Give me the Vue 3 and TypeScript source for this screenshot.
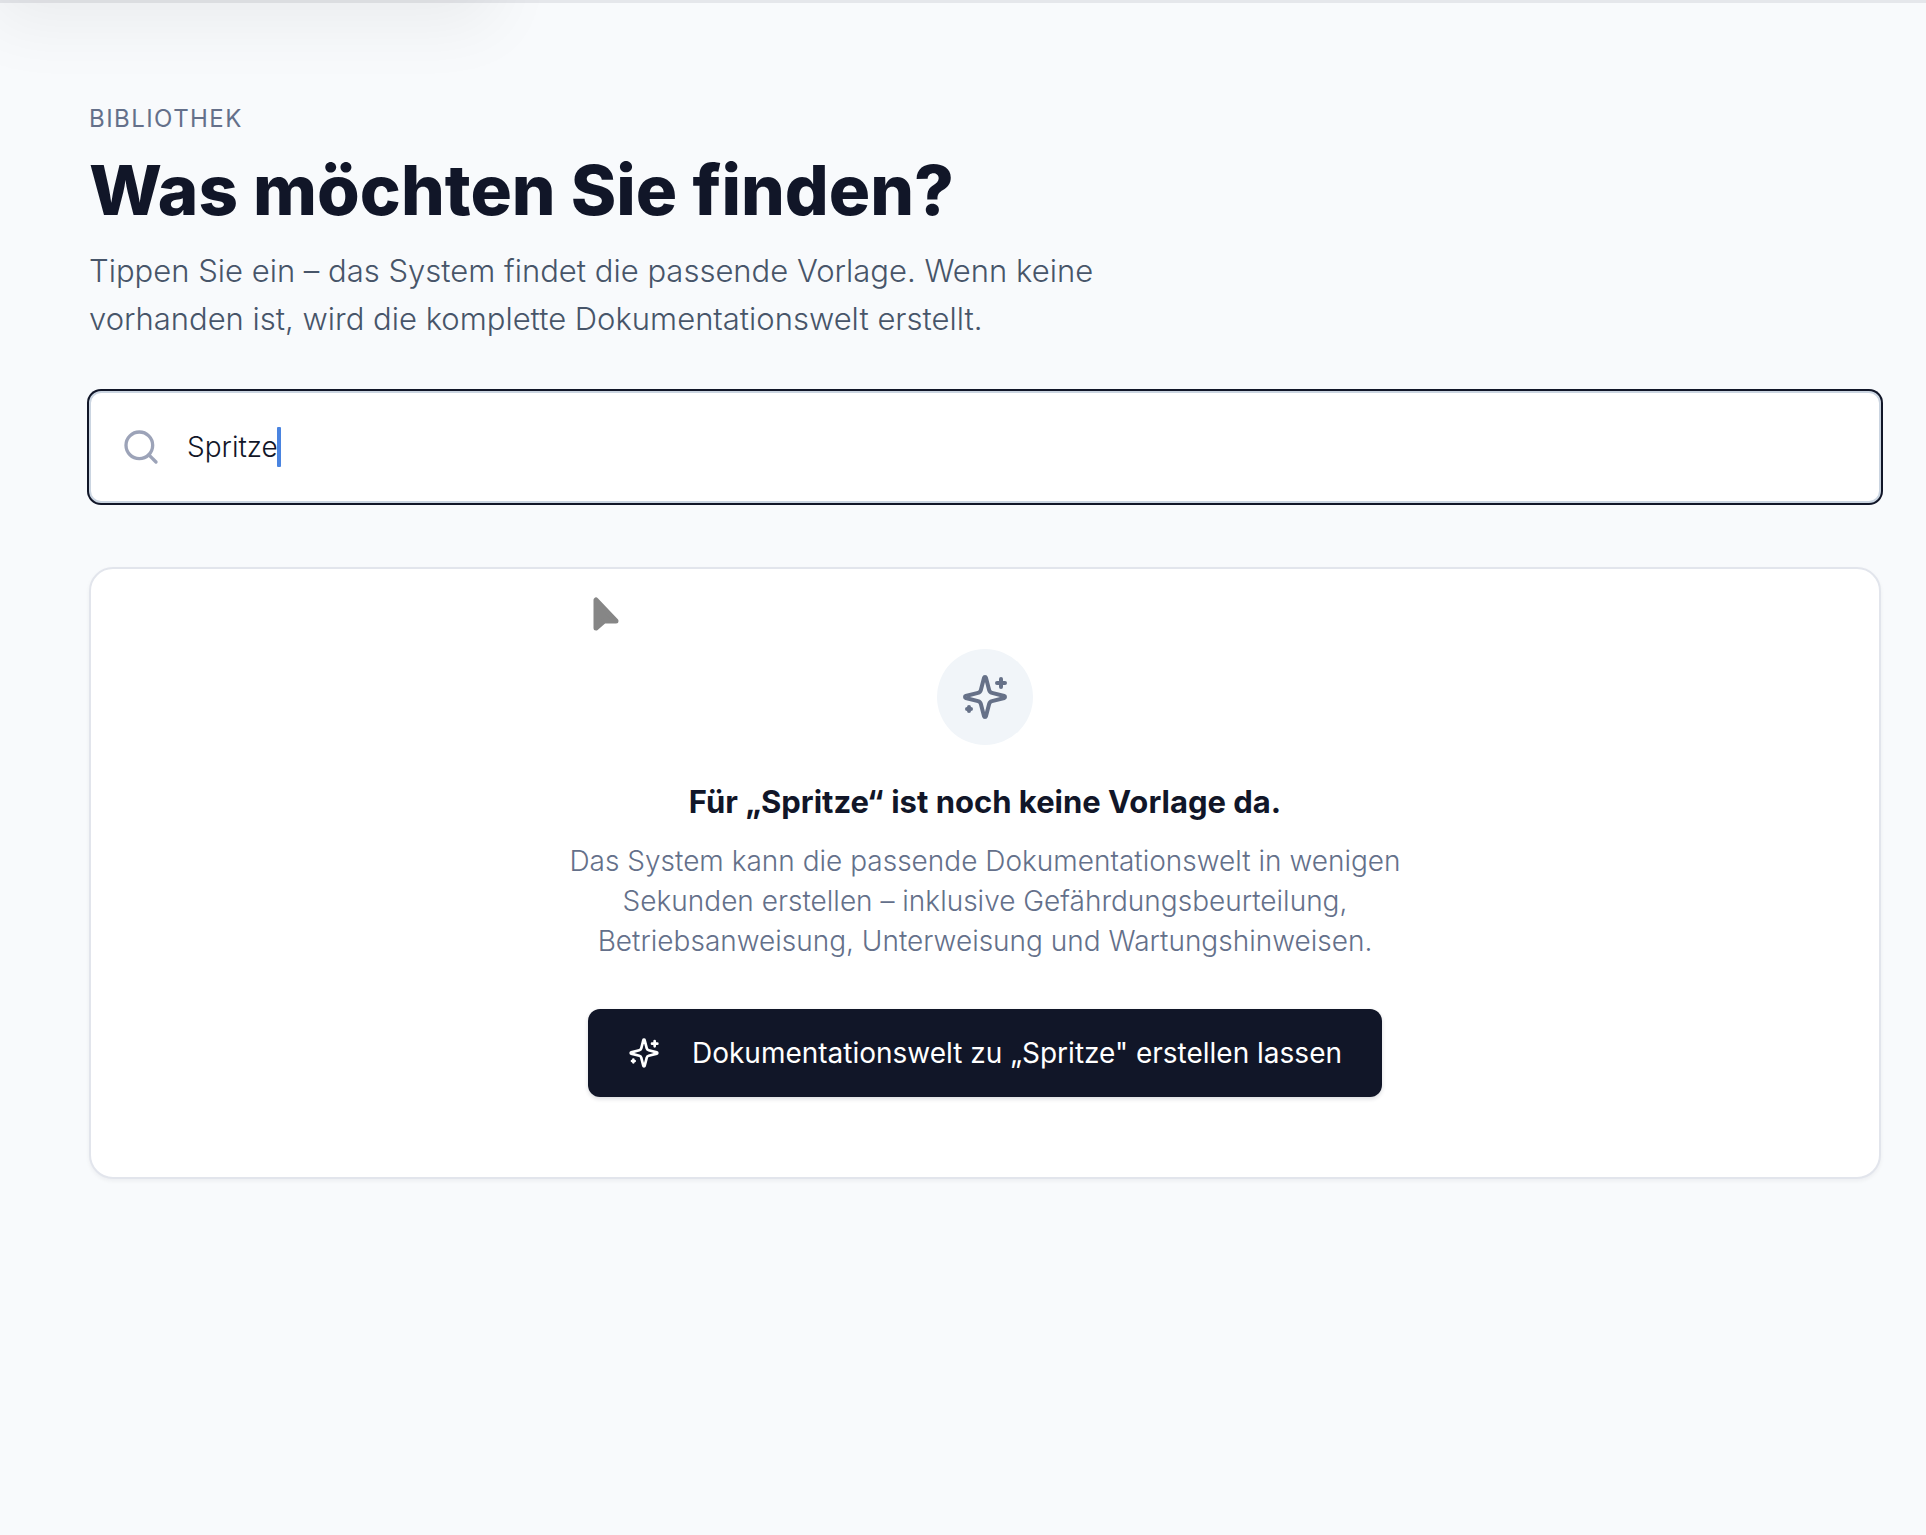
<script setup lang="ts">
import { ref } from 'vue'

const query = ref('Spritze')
</script>

<template>
  <div class="page">
    <div class="topbar">
      <div class="flyout"></div>
    </div>

    <main class="content">
      <header class="intro">
        <p class="eyebrow">Bibliothek</p>
        <h1 class="title">Was möchten Sie finden?</h1>
        <p class="lead">
          Tippen Sie ein – das System findet die passende Vorlage. Wenn keine<br />
          vorhanden ist, wird die komplette Dokumentationswelt erstellt.
        </p>
      </header>

      <label class="search">
        <svg class="search-icon" viewBox="0 0 24 24" aria-hidden="true">
          <circle cx="11" cy="11" r="8" />
          <path d="m21 21-4.3-4.3" />
        </svg>
        <input v-model="query" class="search-input" type="text" aria-label="Suche" />
        <span class="caret"></span>
      </label>

      <section class="card">
        <svg class="pointer" viewBox="0 0 26 34" aria-hidden="true">
          <path d="M3 3v28l8-7h12z" />
        </svg>
        <div class="badge">
          <svg class="badge-icon" viewBox="0 0 24 24" aria-hidden="true">
            <path d="M9.937 15.5A2 2 0 0 0 8.5 14.063l-6.135-1.582a.5.5 0 0 1 0-.962L8.5 9.936A2 2 0 0 0 9.937 8.5l1.582-6.135a.5.5 0 0 1 .963 0L14.063 8.5A2 2 0 0 0 15.5 9.937l6.135 1.581a.5.5 0 0 1 0 .964L15.5 14.063a2 2 0 0 0-1.437 1.437l-1.582 6.135a.5.5 0 0 1-.963 0z" />
            <path d="M20 3v4M22 5h-4M4 17v2M5 18H3" />
          </svg>
        </div>
        <h2 class="card-title">Für „{{ query }}“ ist noch keine Vorlage da.</h2>
        <p class="card-text">
          Das System kann die passende Dokumentationswelt in wenigen<br />
          Sekunden erstellen – inklusive Gefährdungsbeurteilung,<br />
          Betriebsanweisung, Unterweisung und Wartungshinweisen.
        </p>
        <button class="create" type="button">
          <svg class="create-icon" viewBox="0 0 24 24" aria-hidden="true">
            <path d="M9.937 15.5A2 2 0 0 0 8.5 14.063l-6.135-1.582a.5.5 0 0 1 0-.962L8.5 9.936A2 2 0 0 0 9.937 8.5l1.582-6.135a.5.5 0 0 1 .963 0L14.063 8.5A2 2 0 0 0 15.5 9.937l6.135 1.581a.5.5 0 0 1 0 .964L15.5 14.063a2 2 0 0 0-1.437 1.437l-1.582 6.135a.5.5 0 0 1-.963 0z" />
            <path d="M20 3v4M22 5h-4M4 17v2M5 18H3" />
          </svg>
          <span>Dokumentationswelt zu „{{ query }}" erstellen lassen</span>
        </button>
      </section>
    </main>
  </div>
</template>

<style>
body {
  margin: 0;
  background: #f8fafc;
}
</style>

<style scoped>
.page {
  min-height: 100vh;
  overflow: hidden;
  background: #f8fafc;
  color: #111628;
  font-family: Inter, "Liberation Sans", sans-serif;
}

.topbar {
  position: relative;
  height: 3px;
  background: #e5e7eb;
}

.flyout {
  position: absolute;
  left: -32px;
  bottom: 100%;
  width: 550px;
  height: 400px;
  box-shadow: 0 48px 64px -24px rgba(0, 0, 0, 0.06);
}

.content {
  display: flex;
  flex-direction: column;
  padding: 100px 45px 0 89px;
}

.eyebrow {
  margin: 0 0 15px;
  font-size: 24px;
  line-height: 32px;
  letter-spacing: 0.06em;
  text-transform: uppercase;
  color: #64708a;
}

.title {
  margin: 0 0 17px;
  font-size: 69px;
  line-height: 80px;
  font-weight: 800;
}

.lead {
  margin: 0 0 48px;
  font-size: 31px;
  line-height: 48px;
  font-weight: 300;
  color: #475569;
}

.search {
  position: relative;
  display: flex;
  align-items: center;
  gap: 26px;
  height: 108px;
  padding: 0 30px;
  border: 2px solid #cbd5e1;
  border-radius: 12px;
  background: #fff;
  box-shadow: 0 0 0 2px #111628;
}

.search-icon {
  flex: none;
  width: 40px;
  height: 40px;
  fill: none;
  stroke: #9ca3b8;
  stroke-width: 2;
  stroke-linecap: round;
  stroke-linejoin: round;
}

.search-input {
  flex: 1;
  min-width: 0;
  padding: 0;
  border: 0;
  outline: 0;
  background: transparent;
  color: #111628;
  font-family: inherit;
  font-size: 28px;
  font-weight: 300;
  line-height: 40px;
}

.caret {
  position: absolute;
  top: 34px;
  left: 186px;
  width: 4px;
  height: 40px;
  border-radius: 1px;
  background: #4a84e0;
}

.card {
  position: relative;
  display: flex;
  flex-direction: column;
  align-items: center;
  margin-top: 64px;
  padding: 80px 32px;
  border: 2px solid #e2e5ec;
  border-radius: 24px;
  background: #fff;
  box-shadow: 0 2px 4px rgba(15, 23, 42, 0.05);
  text-align: center;
}

.pointer {
  position: absolute;
  top: 28px;
  left: 502px;
  width: 26px;
  height: 34px;
  fill: #868686;
  stroke: #868686;
  stroke-width: 5;
  stroke-linejoin: round;
}

.badge {
  display: flex;
  align-items: center;
  justify-content: center;
  width: 96px;
  height: 96px;
  border-radius: 50%;
  background: #f1f5f9;
}

.badge-icon,
.create-icon {
  flex: none;
  fill: none;
  stroke-width: 2;
  stroke-linecap: round;
  stroke-linejoin: round;
}

.badge-icon {
  width: 48px;
  height: 48px;
  stroke: #667188;
}

.card-title {
  margin: 37px 0 19px;
  font-size: 31px;
  line-height: 40px;
  font-weight: 700;
}

.card-text {
  margin: 0 0 48px;
  font-size: 28px;
  line-height: 40px;
  font-weight: 300;
  color: #64708a;
}

.create {
  display: flex;
  align-items: center;
  gap: 32px;
  height: 88px;
  padding: 0 40px;
  border: 0;
  border-radius: 12px;
  background: #111628;
  box-shadow: 0 2px 4px rgba(15, 23, 42, 0.15);
  color: #fff;
  font-family: inherit;
  font-size: 28px;
  line-height: 40px;
}

.create-icon {
  width: 32px;
  height: 32px;
  stroke: #fff;
}
</style>
